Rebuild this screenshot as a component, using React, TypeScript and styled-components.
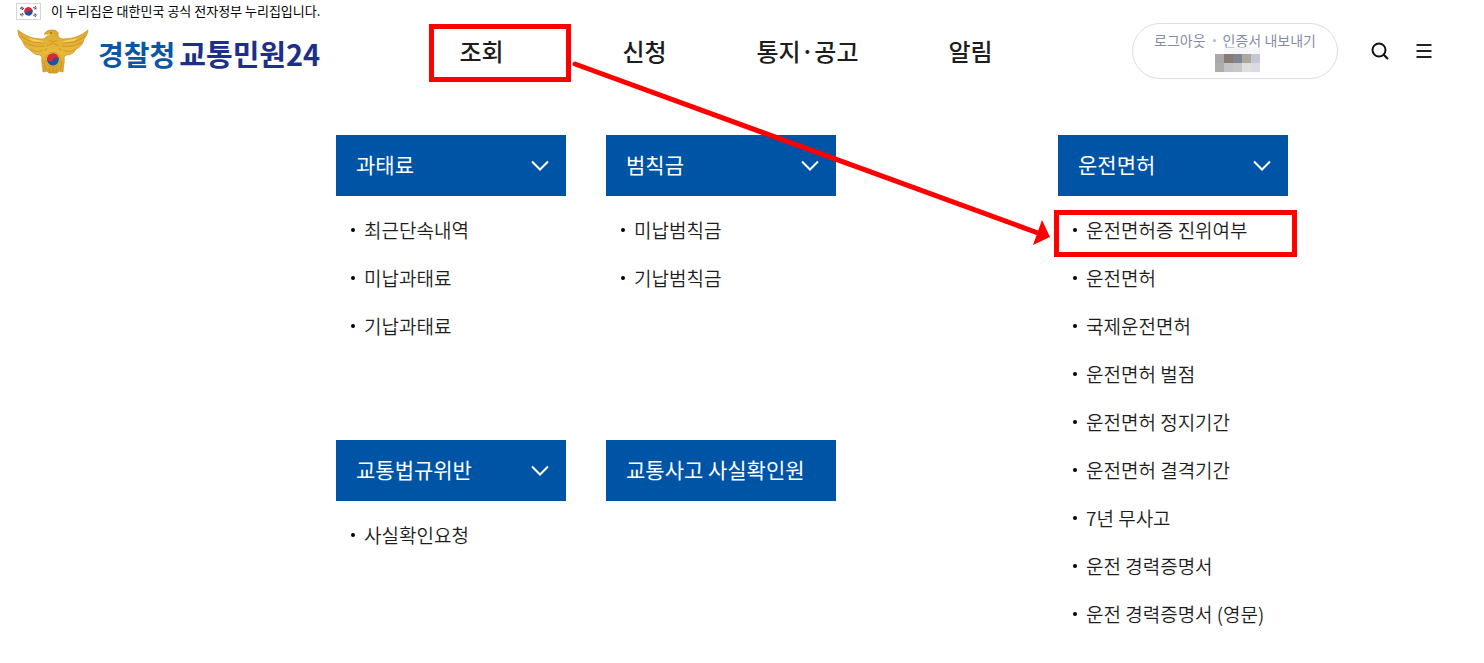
import React from "react";
import styled, { createGlobalStyle } from "styled-components";

const GlobalStyle = createGlobalStyle`
  *, *::before, *::after { box-sizing: border-box; }
  body {
    margin: 0;
    background: #fff;
    color: #1d1d1d;
    font-family: "Noto Sans CJK KR", "Noto Sans", sans-serif;
  }
  ul { list-style: none; margin: 0; padding: 0; }
  a { color: inherit; text-decoration: none; }
  button { font: inherit; border: 0; padding: 0; cursor: pointer; }
  svg { display: block; }
`;

const Page = styled.div`
  position: relative;
  min-width: 1320px;
  overflow-x: clip;
`;

const NoticeBar = styled.div`
  display: flex;
  align-items: center;
  gap: 10px;
  height: 22px;
  padding: 0 16px;
  font-size: 13px;
  line-height: 20px;
  color: #000;
`;

const Header = styled.header`
  display: grid;
  grid-template-columns: 1fr 652px 1fr;
  align-items: center;
  height: 58px;
  padding: 0 48px 0 16px;
`;

const Brand = styled.a`
  display: flex;
  align-items: center;
  gap: 8px;
  font-size: 28px;
  font-weight: 700;
  line-height: 32px;
  white-space: nowrap;
`;

const BrandText = styled.span`
  display: flex;
  align-items: baseline;
  gap: 4px;
  padding-top: 4px;
`;

const Agency = styled.span`
  color: #0b57a4;
`;

const Service = styled.span`
  font-size: 29px;
  color: #1d2f8a;
`;

const Nav = styled.nav`
  display: grid;
  grid-template-columns: repeat(4, 1fr);
`;

const NavLink = styled.a`
  position: relative;
  display: flex;
  align-items: center;
  justify-content: center;
  height: 58px;
  font-size: 24px;
  font-weight: 500;
  line-height: 32px;
`;

const NavMark = styled.span`
  position: absolute;
  inset: 2px 0 -2px 29px;
  width: 142px;
  border: 5px solid #f00;
  pointer-events: none;
`;

const Tools = styled.div`
  display: flex;
  align-items: center;
  justify-content: flex-end;
`;

const Account = styled.div`
  display: flex;
  flex-direction: column;
  align-items: center;
  width: 206px;
  height: 56px;
  padding-top: 6px;
  margin-right: 30px;
  border: 1px solid #d9dcea;
  border-radius: 28px;
  font-size: 14px;
  line-height: 20px;
  color: #838ca2;
`;

const AccountLinks = styled.div`
  display: flex;
  align-items: center;
  gap: 7px;
  white-space: nowrap;
`;

const SmallDot = styled.span`
  width: 3px;
  height: 3px;
  border-radius: 50%;
  background: #b4bacb;
`;

const IconButton = styled.button`
  display: flex;
  align-items: center;
  justify-content: center;
  width: 24px;
  height: 24px;
  background: none;
  & + & { margin-left: 20px; }
`;

const Menu = styled.main`
  display: flex;
  justify-content: space-between;
  padding: 55px 196px 24px 336px;
`;

const Groups = styled.div`
  display: grid;
  grid-template-columns: 230px 230px;
  grid-template-rows: minmax(265px, auto) auto;
  align-content: start;
  gap: 40px;
`;

const Group = styled.section`
  width: 230px;
`;

const GroupButton = styled.button`
  display: flex;
  align-items: center;
  justify-content: space-between;
  width: 100%;
  height: 61px;
  padding: 0 17px 0 20px;
  background: #0054a6;
  color: #fff;
  font-size: 21px;
  font-weight: 400;
  line-height: 28px;
  white-space: nowrap;
`;

const GroupTitle = styled.span`
  padding-bottom: 4px;
`;

const Items = styled.ul`
  padding-top: 10px;
`;

const Item = styled.li`
  position: relative;
  display: flex;
  align-items: center;
  gap: 9px;
  height: 48px;
  padding-left: 15px;
  font-size: 19px;
  font-weight: 350;
  line-height: 28px;
  white-space: nowrap;
  &::before {
    content: "";
    width: 4px;
    height: 4px;
    border-radius: 50%;
    background: #000;
  }
`;

const ItemMark = styled.span`
  position: absolute;
  top: 4px;
  left: -4px;
  width: 243px;
  height: 47px;
  border: 5px solid #f00;
  pointer-events: none;
`;

const ArrowLayer = styled.svg`
  position: absolute;
  top: 0;
  left: 0;
  pointer-events: none;
`;

const Mosaic = styled.svg`
  margin-top: -3px;
`;

const Flag = () => (
  <svg width="25" height="17" viewBox="0 0 25 17" role="img" aria-label="태극기">
    <rect x=".5" y=".5" width="24" height="16" fill="#fff" stroke="#d6d6d6" />
    <g transform="rotate(25 12.5 8.5)">
      <circle cx="12.5" cy="8.5" r="4.2" fill="#1f4fa0" />
      <path d="M8.3 8.5a4.2 4.2 0 0 1 8.4 0a2.1 2.1 0 0 0-4.2 0a2.1 2.1 0 0 1-4.2 0z" fill="#e0262f" />
    </g>
    <g stroke="#333" strokeWidth="1">
      <path d="M4.2 5.8 6 3.6M5.2 6.4 7 4.2M6.2 7 7.8 5" />
      <path d="M17.4 4.4 19 6.6M18.3 3.8 19.9 6M19.2 3.2 20.8 5.4" strokeDasharray="1.2 .4" />
      <path d="M4.2 11.2 6 13.4M5.2 10.6 7 12.8M6.2 10 7.8 12" strokeDasharray="2 .4" />
      <path d="M17.4 12.6 19 10.4M18.3 13.2 19.9 11M19.2 13.8 20.8 11.6" strokeDasharray="1.2 .4" />
    </g>
  </svg>
);

const Emblem = () => (
  <svg width="74" height="46" viewBox="0 0 74 46" aria-hidden="true">
    <defs>
      <linearGradient id="gold" x1="0" y1="0" x2="0" y2="1">
        <stop offset="0" stopColor="#dba92f" />
        <stop offset=".5" stopColor="#e9b93a" />
        <stop offset="1" stopColor="#d6a42a" />
      </linearGradient>
    </defs>
    <path
      d="M2 2C9 8 17 11 26 11C28 11 29 10 30 9L32 8C32 7 31 6 30 6L28.5 6.5C28.5 4 32 2 36 2C40 2 43 4 42 7C42 9 44 11 47 11C57 11 65 8 72 2C71 7 70 9 68 11L67 14C66 17 63 20 60 21L58 24C56 26 53 27 50 27L48 29C49 34 47 39 47 44L43 43L41 45H33L31 43L27 44C27 39 25 34 26 29L24 27C20 27 17 25 15 23L13 21C10 20 8 17 7 14L5 11C3 9 2 6 2 2Z"
      fill="url(#gold)"
      stroke="#c8942a"
      strokeWidth=".8"
    />
    <g fill="none" stroke="#c08b20" strokeWidth=".7">
      <path d="M5 8C12 14 20 15 28 15M8 14C14 18 21 19 28 18M14 21C19 24 23 24 27 22M69 8C62 14 54 15 46 15M66 14C60 18 53 19 46 18M60 21C55 24 51 24 47 22" />
      <path d="M33 12C35 14 39 14 41 12M31 18 37 15 43 18M29 23 31 20M45 23 43 20" />
      <path d="M28 33 30 42M46 33 44 42M33 40 34 44M37 40V44M41 40 40 44" />
    </g>
    <path d="M12 10 26 13 28 14.5 16 13ZM62 10 48 13 46 14.5 58 13Z" fill="#f7d35a" />
    <path d="M28.5 6.5 34 5.5 32 8Z" fill="#f8d96c" />
    <circle cx="35" cy="5" r=".8" fill="#77500c" />
    <circle cx="37" cy="31.5" r="7.2" fill="#edc147" stroke="#c28d1c" strokeWidth=".7" />
    <g transform="rotate(20 37 31.5)">
      <circle cx="37" cy="31.5" r="6" fill="#1c55a5" />
      <path d="M31 31.5a6 6 0 0 1 12 0a3 3 0 0 0-6 0a3 3 0 0 1-6 0z" fill="#df2433" />
    </g>
  </svg>
);

const Chevron = () => (
  <svg width="18" height="12" viewBox="0 0 18 12" fill="none" stroke="#fff" strokeWidth="2" aria-hidden="true">
    <path d="M1 1.5 9 9.5 17 1.5" />
  </svg>
);

const mosaic = [
  ["#aaa9aa", "#877b73", "#7e878f", "#ada79e", "#c4c8d2"],
  ["#b0aca8", "#c2c3c7", "#c6c7c8", "#e1dfdc", "#d8dbe2"],
];

const MaskedName = () => (
  <Mosaic width="49" height="25" viewBox="0 0 49 25" aria-hidden="true">
    <rect x="13" width="36" height="7" fill="#eef0f6" opacity=".6" />
    {mosaic.map((row, y) =>
      row.map((fill, x) => <rect key={`${x}-${y}`} x={4 + x * 9} y={7 + y * 9} width="9" height="9" fill={fill} />)
    )}
  </Mosaic>
);

type MenuGroup = { title: string; items: string[]; marked?: string };

const leftGroups: MenuGroup[] = [
  { title: "과태료", items: ["최근단속내역", "미납과태료", "기납과태료"] },
  { title: "범칙금", items: ["미납범칙금", "기납범칙금"] },
  { title: "교통법규위반", items: ["사실확인요청"] },
  { title: "교통사고 사실확인원", items: [] },
];

const licenseGroup: MenuGroup = {
  title: "운전면허",
  marked: "운전면허증 진위여부",
  items: [
    "운전면허증 진위여부",
    "운전면허",
    "국제운전면허",
    "운전면허 벌점",
    "운전면허 정지기간",
    "운전면허 결격기간",
    "7년 무사고",
    "운전 경력증명서",
    "운전 경력증명서 (영문)",
  ],
};

const MenuSection = ({ title, items, marked }: MenuGroup) => (
  <Group>
    <GroupButton type="button">
      <GroupTitle>{title}</GroupTitle>
      {items.length > 0 && <Chevron />}
    </GroupButton>
    {items.length > 0 && (
      <Items>
        {items.map((item) => (
          <Item key={item}>
            <a href="#">{item}</a>
            {item === marked && <ItemMark />}
          </Item>
        ))}
      </Items>
    )}
  </Group>
);

export default function App() {
  return (
    <Page>
      <GlobalStyle />
      <NoticeBar>
        <Flag />
        <span>이 누리집은 대한민국 공식 전자정부 누리집입니다.</span>
      </NoticeBar>
      <Header>
        <Brand href="#">
          <Emblem />
          <BrandText>
            <Agency>경찰청</Agency>
            <Service>교통민원24</Service>
          </BrandText>
        </Brand>
        <Nav>
          <NavLink href="#">
            조회
            <NavMark />
          </NavLink>
          <NavLink href="#">신청</NavLink>
          <NavLink href="#">통지·공고</NavLink>
          <NavLink href="#">알림</NavLink>
        </Nav>
        <Tools>
          <Account>
            <AccountLinks>
              <a href="#">로그아웃</a>
              <SmallDot />
              <a href="#">인증서 내보내기</a>
            </AccountLinks>
            <MaskedName />
          </Account>
          <IconButton type="button" aria-label="검색">
            <svg width="18" height="18" viewBox="0 0 18 18" fill="none" stroke="#111" strokeWidth="2">
              <circle cx="8" cy="8" r="6.5" />
              <path d="M12.5 12.5 17 17" strokeWidth="2.2" />
            </svg>
          </IconButton>
          <IconButton type="button" aria-label="전체메뉴">
            <svg width="16" height="14" viewBox="0 0 16 14" fill="none" stroke="#222" strokeWidth="2">
              <path d="M.5 1H15.5M.5 7H15.5M.5 13H15.5" />
            </svg>
          </IconButton>
        </Tools>
      </Header>
      <Menu>
        <Groups>
          {leftGroups.map((group) => (
            <MenuSection key={group.title} {...group} />
          ))}
        </Groups>
        <MenuSection {...licenseGroup} />
      </Menu>
      <ArrowLayer width="1060" height="250" viewBox="0 0 1060 250" aria-hidden="true">
        <path d="M575 64 1038 233" stroke="#f00" strokeWidth="5" strokeLinecap="round" />
        <path d="M1042 220 1050 237 1033 245Z" fill="#f00" />
      </ArrowLayer>
    </Page>
  );
}
